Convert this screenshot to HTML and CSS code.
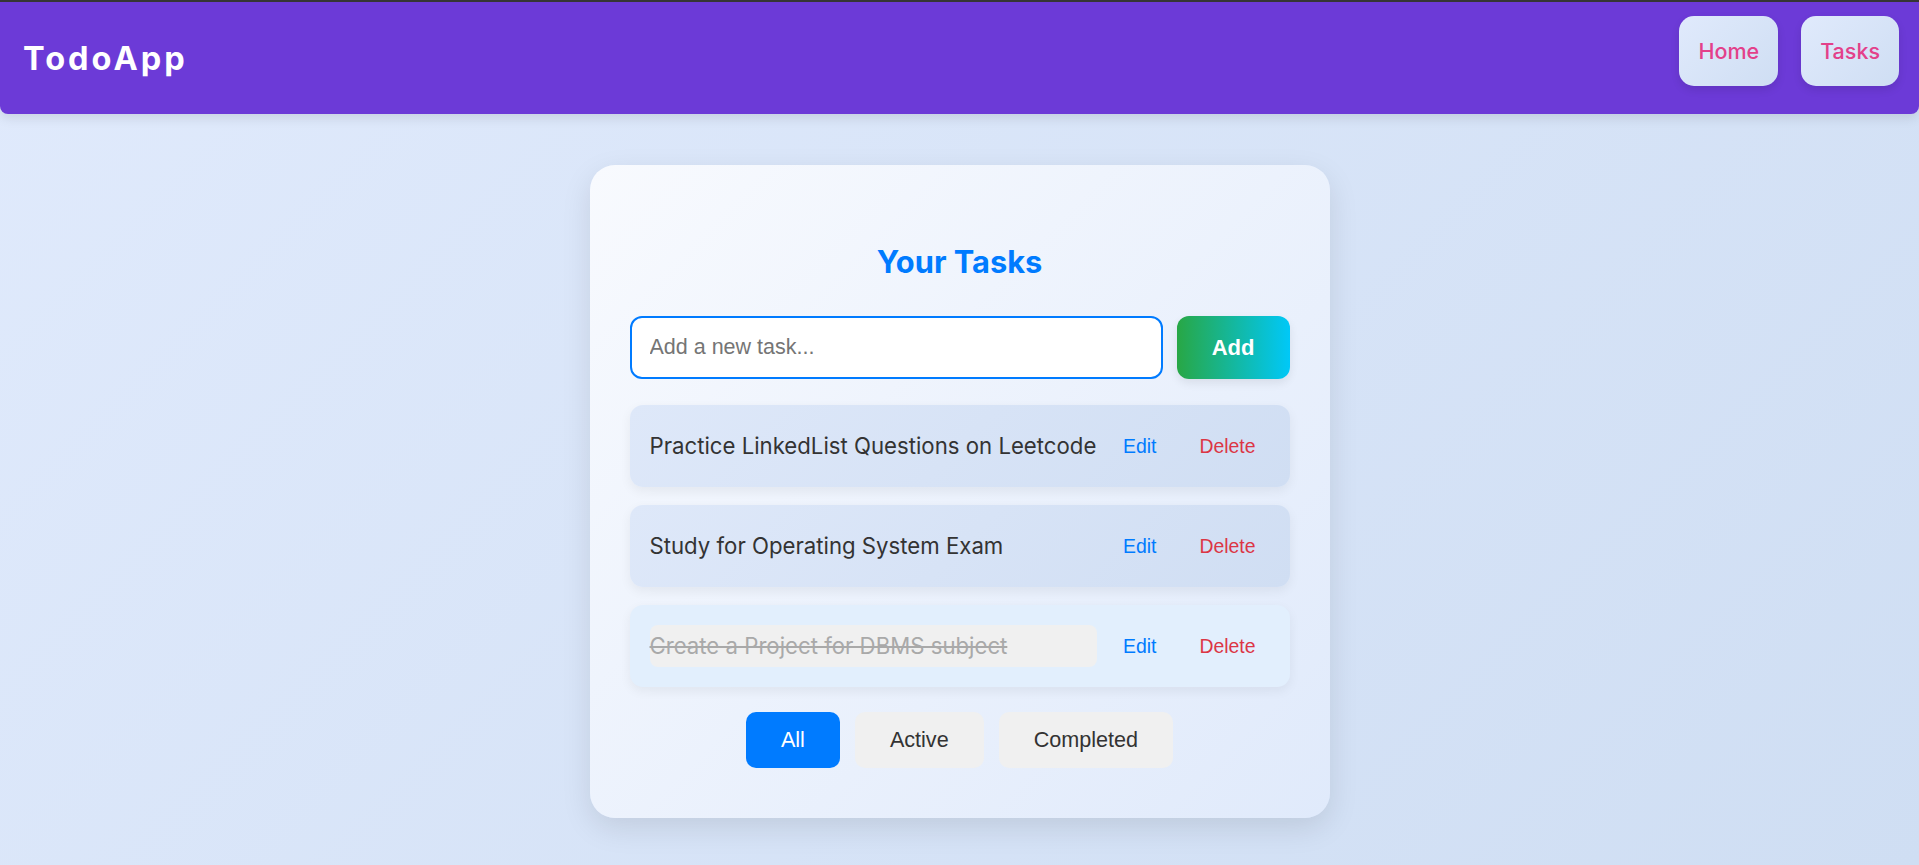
FILE: index.html
```html
<!DOCTYPE html>
<html lang="en">
<head>
<meta charset="utf-8">
<title>TodoApp</title>
<link rel="stylesheet" href="styles.css">
</head>
<body>
<header class="topbar">
  <div class="logo">TodoApp</div>
  <nav class="nav">
    <a class="nav-btn" href="#">Home</a>
    <a class="nav-btn" href="#">Tasks</a>
  </nav>
</header>
<main class="main">
  <section class="card">
    <h2 class="title">Your Tasks</h2>
    <div class="add-row">
      <input class="task-input" type="text" placeholder="Add a new task...">
      <button class="add-btn">Add</button>
    </div>
    <ul class="task-list">
      <li class="task">
        <span class="task-text">Practice LinkedList Questions on Leetcode</span>
        <button class="act edit">Edit</button>
        <button class="act del">Delete</button>
      </li>
      <li class="task">
        <span class="task-text">Study for Operating System Exam</span>
        <button class="act edit">Edit</button>
        <button class="act del">Delete</button>
      </li>
      <li class="task done">
        <span class="task-text">Create a Project for DBMS subject</span>
        <button class="act edit">Edit</button>
        <button class="act del">Delete</button>
      </li>
    </ul>
    <div class="filters">
      <button class="filter on">All</button>
      <button class="filter">Active</button>
      <button class="filter">Completed</button>
    </div>
  </section>
</main>
</body>
</html>
```
FILE: styles.css
```css
* { box-sizing: border-box; }
html, body { margin: 0; padding: 0; }
body {
  min-height: 100vh;
  background: linear-gradient(135deg, #e0eafc, #cfdef3);
  font-family: "Inter", "DejaVu Sans", sans-serif;
}
.topbar {
  height: 114px;
  border-top: 2px solid #353535;
  background: #6c3ad7;
  border-radius: 0 0 8px 8px;
  display: flex;
  justify-content: space-between;
  align-items: center;
  padding: 0 20px 0 23px;
  box-shadow: 0 4px 12px rgba(0, 0, 0, 0.1);
}
.logo {
  color: #fff;
  font-weight: 700;
  font-size: 32.5px;
  letter-spacing: 3px;
}
.nav {
  display: flex;
  gap: 23px;
  padding-bottom: 15px;
}
.nav-btn {
  height: 70px;
  padding: 0 19px;
  display: flex;
  align-items: center;
  border-radius: 15px;
  background: linear-gradient(135deg, #e0eafc, #cfdef3);
  color: #e3408a;
  font-weight: 500;
  font-size: 21.5px;
  text-decoration: none;
  box-shadow: 0 4px 8px rgba(0, 0, 0, 0.1);
}
.main {
  display: flex;
  justify-content: center;
  padding-top: 51px;
}
.card {
  width: 740px;
  padding: 40px 40px 50px;
  border-radius: 25px;
  background: linear-gradient(135deg, #f8fafe, #e0eafb);
  box-shadow: 0 10px 30px rgba(0, 0, 0, 0.1);
}
.title {
  margin: 35px 0 32px;
  line-height: 44px;
  text-align: center;
  color: #007bff;
  font-size: 30.8px;
  font-weight: 700;
}
.add-row {
  display: flex;
  gap: 14px;
  margin-bottom: 26px;
}
.task-input {
  flex: 1;
  height: 63px;
  border: 2px solid #007bff;
  border-radius: 12px;
  padding: 0 18px;
  font-family: "Liberation Sans", Arial, sans-serif;
  font-size: 21.5px;
  color: #333;
  background: #fff;
  outline: none;
}
.task-input::placeholder { color: #757575; }
.add-btn {
  height: 63px;
  padding: 0 35px;
  border: none;
  border-radius: 12px;
  background: linear-gradient(to right, #28a745, #00c8f8);
  color: #fff;
  font-family: "Liberation Sans", Arial, sans-serif;
  font-weight: 700;
  font-size: 22px;
  box-shadow: 0 4px 10px rgba(0, 0, 0, 0.08);
}
.task-list {
  list-style: none;
  margin: 0;
  padding: 0;
  display: flex;
  flex-direction: column;
  gap: 18px;
}
.task {
  display: flex;
  align-items: center;
  padding: 20px;
  border-radius: 13px;
  background: linear-gradient(135deg, #dee8f9, #d0def3);
  box-shadow: 0 4px 12px rgba(0, 0, 0, 0.06);
}
.task.done { background: #e2effd; }
.task-text {
  flex: 1;
  line-height: 32px;
  padding: 5px 0;
  font-size: 22.2px;
  color: #333;
  border-radius: 8px;
  white-space: nowrap;
}
.task.done .task-text {
  background: #f0f0f0;
  color: #a9a9a9;
  text-decoration: line-through;
}
.act {
  border: none;
  background: none;
  padding: 8px 14px;
  margin-left: 15px;
  font-family: "Liberation Sans", Arial, sans-serif;
  font-size: 19.4px;
}
.act.edit { color: #007bff; margin-left: 12px; }
.act.del { color: #dc3545; }
.filters {
  display: flex;
  justify-content: center;
  gap: 15px;
  margin-top: 25px;
}
.filter {
  height: 56px;
  padding: 0 35px;
  border: none;
  border-radius: 10px;
  background: #f0f0f0;
  color: #333;
  font-family: "Liberation Sans", Arial, sans-serif;
  font-size: 21.6px;
}
.filter.on { background: #007bff; color: #fff; }
```
